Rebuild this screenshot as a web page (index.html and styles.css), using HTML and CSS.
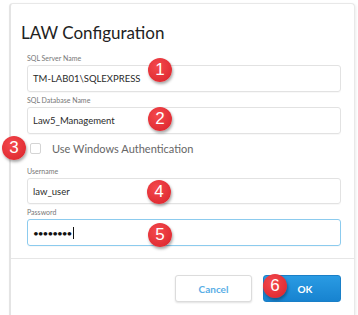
FILE: index.html
```html
<!DOCTYPE html>
<html>
<head>
<meta charset="utf-8">
<link rel="stylesheet" href="styles.css">
</head>
<body>
<div class="dialog">
  <h1 class="title">LAW Configuration</h1>
  <div class="form">
    <div class="field f1">
      <div class="label">SQL Server Name</div>
      <div class="input">TM-LAB01\SQLEXPRESS</div>
    </div>
    <div class="field f2">
      <div class="label">SQL Database Name</div>
      <div class="input">Law5_Management</div>
    </div>
    <div class="check">
      <span class="box"></span>
      <span class="check-label">Use Windows Authentication</span>
    </div>
    <div class="field f3">
      <div class="label">Username</div>
      <div class="input short">law_user</div>
    </div>
    <div class="field f4">
      <div class="label">Password</div>
      <div class="input focused"><span class="dots">••••••••</span><span class="caret"></span></div>
    </div>
  </div>
  <div class="footer">
    <button class="btn cancel">Cancel</button>
    <button class="btn ok">OK</button>
  </div>
</div>
<span class="badge b1">1</span>
<span class="badge b2">2</span>
<span class="badge b3">3</span>
<span class="badge b4">4</span>
<span class="badge b5">5</span>
<span class="badge b6">6</span>
</body>
</html>
```
FILE: styles.css
```css
html, body {
  margin: 0;
  padding: 0;
  background: #ffffff;
}
body {
  position: relative;
  width: 358px;
  height: 315px;
  overflow: hidden;
  font-family: Lato, "Open Sans", sans-serif;
}
.dialog {
  margin: 3px 0 0 9px;
  width: 346px;
  height: 312px;
  box-sizing: border-box;
  background: #ffffff;
  border: 1px solid #e8e8e8;
  border-bottom: none;
  border-left: 2px solid #e4e4e4;
  border-radius: 4px 4px 0 0;
  box-shadow: 1px 1px 3px rgba(0, 0, 0, 0.08);
}
.title {
  margin: 18px 0 0 10px;
  font-size: 17px;
  line-height: 22px;
  font-weight: 400;
  color: #222;
}
.form {
  padding: 0 13px 0 16px;
}
.label {
  font-size: 7px;
  line-height: 10px;
  color: #777;
  margin-bottom: 2px;
}
.f1 { margin-top: 9px; }
.f2 { margin-top: 3px; }
.f3 { margin-top: 8px; }
.f4 { margin-top: 3px; }
.input {
  box-sizing: border-box;
  height: 27px;
  border: 1px solid #e2e2e2;
  border-radius: 3px;
  padding-left: 5px;
  display: flex;
  align-items: center;
  font-size: 9.5px;
  color: #2a2a2a;
  box-shadow: 0 1px 1px rgba(0,0,0,0.03);
}
.input.short { height: 26px; }
.input.focused {
  border-color: #8ccbee;
}
.dots {
  font-size: 10px;
  letter-spacing: -1px;
  color: #111;
}
.caret {
  display: inline-block;
  width: 1px;
  height: 12px;
  background: #111;
  margin-left: 2px;
}
.check {
  margin-top: 4px;
  height: 20px;
  display: flex;
  align-items: center;
}
.box {
  box-sizing: border-box;
  width: 11px;
  height: 11px;
  border: 1px solid #d4d4d4;
  border-radius: 2px;
  margin-left: 3px;
}
.check-label {
  margin-left: 11px;
  font-size: 11px;
  color: #666;
}
.footer {
  margin-top: 12px;
  border-top: 1px solid #e6e6e6;
  padding: 16px 13px 0 0;
  display: flex;
  justify-content: flex-end;
  gap: 11px;
}
.btn {
  box-sizing: border-box;
  height: 27px;
  width: 78px;
  border-radius: 3px;
  font-family: Lato, sans-serif;
  font-weight: 700;
  font-size: 10px;
  cursor: pointer;
}
.cancel {
  width: 77px;
  background: #fff;
  border: 1px solid #dcdcdc;
  color: #5aaee6;
  box-shadow: 0 1px 2px rgba(0,0,0,0.12);
}
.ok {
  background: linear-gradient(#2a9be3, #1783d0);
  border: 1px solid #1a7fc7;
  color: #fff;
  padding-left: 12px;
}
.badge {
  position: absolute;
  width: 24px;
  height: 24px;
  border-radius: 50%;
  background: radial-gradient(circle at 40% 35%, #f4494d, #d9222a);
  color: #fff;
  font-family: "Liberation Sans", Arial, sans-serif;
  font-size: 17px;
  line-height: 24px;
  text-align: center;
  box-shadow: 1px 2px 3px rgba(0,0,0,0.35);
}
.b1 { left: 148px; top: 58px; }
.b2 { left: 148px; top: 107px; }
.b3 { left: 2px; top: 136px; }
.b4 { left: 147px; top: 180px; }
.b5 { left: 148px; top: 223px; }
.b6 { left: 263px; top: 274px; }
```
